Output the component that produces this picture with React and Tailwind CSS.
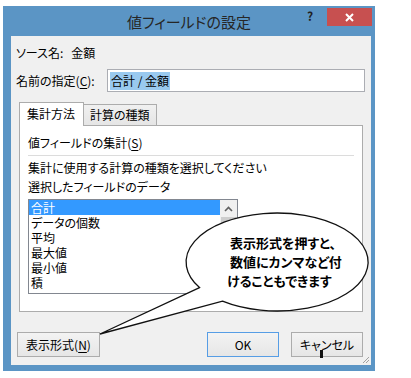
import React from "react";

const items = ["合計", "データの個数", "平均", "最大値", "最小値", "積"];

const Btn = ({ children, className = "" }) => (
  <div
    className={`h-[25px] flex items-center justify-center border bg-linear-to-b from-[#f3f3f3] to-[#e6e6e6] text-[12px] leading-[16px] ${className}`}
  >
    {children}
  </div>
);

export default function App() {
  return (
    <div className="relative w-[411px] h-[378px] overflow-hidden bg-white pl-[3px] pt-[6px] font-['Noto_Sans_CJK_JP',sans-serif] [font-feature-settings:'palt'] text-black">
      {/* window frame */}
      <div className="w-[372px] h-[365px] bg-[#5b95c5] flex flex-col">
        {/* title bar */}
        <div className="h-[30px] grid grid-cols-[1fr_auto_1fr]">
          <div />
          <div className="pt-[5px] text-[15px] leading-[22px] text-[#262626]">
            値フィールドの設定
          </div>
          <div className="flex justify-end items-start pt-[2px] pr-[3px]">
            <span className="w-[14px] mr-[10px] text-center text-[12px] font-bold leading-[16px] text-[#1f1f1f]">
              ?
            </span>
            <div className="w-[45px] h-[18px] bg-[#c75050] flex items-center justify-center">
              <svg width="9" height="9" viewBox="0 0 9 9">
                <path d="M1 1L8 8M8 1L1 8" stroke="white" strokeWidth="2" />
              </svg>
            </div>
          </div>
        </div>

        {/* dialog body */}
        <div className="relative flex-1 ml-[8px] mr-[4px] mb-[6px] bg-[#f0f0f0] flex flex-col">
          <div className="pl-[5px] pt-[9px] flex gap-[8px] text-[12px] leading-[16px]">
            <span>ソース名:</span>
            <span>金額</span>
          </div>

          <div className="mt-[8px] h-[23px] flex items-center">
            <div className="pl-[5px] w-[96px] text-[12px] leading-[16px]">
              名前の指定(<span className="underline underline-offset-2">C</span>):
            </div>
            <div className="w-[258px] h-[23px] border border-[#abadb3] bg-white flex items-center pl-[2px]">
              <span className="bg-[#99c9ef] px-[1px] text-[12px] leading-[18px]">
                合計 / 金額
              </span>
            </div>
          </div>

          {/* tabs */}
          <div className="mt-[10px] ml-[8px] -mb-px h-[24px] flex items-end">
            <div className="relative z-10 w-[65px] h-[24px] bg-white border border-b-0 border-[#acacac] pl-[7px] pt-[3px] text-[12px] leading-[16px]">
              集計方法
            </div>
            <div className="w-[73px] h-[22px] border border-l-0 border-b-0 border-[#acacac] bg-linear-to-b from-[#f0f0f0] to-[#e5e5e5] pl-[6px] pt-[2px] text-[12px] leading-[16px]">
              計算の種類
            </div>
          </div>

          <div className="mx-[8px] h-[187px] border border-[#acacac] bg-white px-[8px] flex flex-col text-[12px] leading-[16px]">
            <div className="pt-[9px]">
              値フィールドの集計(<span className="underline underline-offset-2">S</span>)
            </div>
            <div className="mt-[4px] h-px bg-[#dcdcdc]" />
            <div className="mt-[4px]">集計に使用する計算の種類を選択してください</div>
            <div className="mt-[3px]">選択したフィールドのデータ</div>

            <div className="mt-[4px] w-[210px] h-[95px] border border-[#828790] flex">
              <div className="flex-1 flex flex-col">
                {items.map((it, i) => (
                  <div
                    key={it}
                    className={`h-[15px] pl-[2px] text-[12px] leading-[15px] ${
                      i === 0 ? "bg-[#3399ff] text-white" : ""
                    }`}
                  >
                    {it}
                  </div>
                ))}
              </div>
              <div className="w-[17px] bg-[#f0f0f0] flex flex-col">
                <div className="h-[17px] flex items-center justify-center">
                  <svg width="9" height="6" viewBox="0 0 9 6">
                    <path d="M1 5L4.5 1.5L8 5" stroke="#606060" strokeWidth="1.6" fill="none" />
                  </svg>
                </div>
                <div className="mx-[1px] h-[40px] bg-[#cdcdcd]" />
              </div>
            </div>
          </div>

          {/* buttons */}
          <div className="mt-[20px] pl-[6px] pr-[8px] flex">
            <Btn className="w-[83px] border-[#acacac]">
              表示形式(<span className="underline underline-offset-2">N</span>)
            </Btn>
            <Btn className="ml-auto w-[72px] border-[#569de5]">OK</Btn>
            <Btn className="ml-[12px] w-[72px] border-[#acacac]">キャンセル</Btn>
          </div>

          {/* resize grip */}
          <svg className="absolute right-[1px] bottom-[1px]" width="9" height="9" viewBox="0 0 9 9">
            <path d="M8 2L2 8M8 5L5 8" stroke="#a0a0a0" strokeWidth="1" />
          </svg>
        </div>
      </div>

      {/* callout */}
      <svg className="absolute top-0 left-0 pointer-events-none" width="411" height="378" viewBox="0 0 411 378">
        <path
          d="M199.5 287.6 L100 334 L222.5 301.2 A91 49 0 1 0 199.5 287.6 Z"
          fill="white"
          stroke="#111"
          strokeWidth="1.3"
        />
      </svg>
      <div className="absolute left-[227px] top-[233px] text-[13px] leading-[19px] font-bold text-black">
        <div className="pl-[3px]">表示形式を押すと、</div>
        <div className="pl-[3px]">数値にカンマなど付</div>
        <div>けることもできます</div>
      </div>

      {/* text cursor */}
      <div className="absolute left-[320px] top-[350px] w-[3px] h-[8px] bg-[#111]" />
    </div>
  );
}
